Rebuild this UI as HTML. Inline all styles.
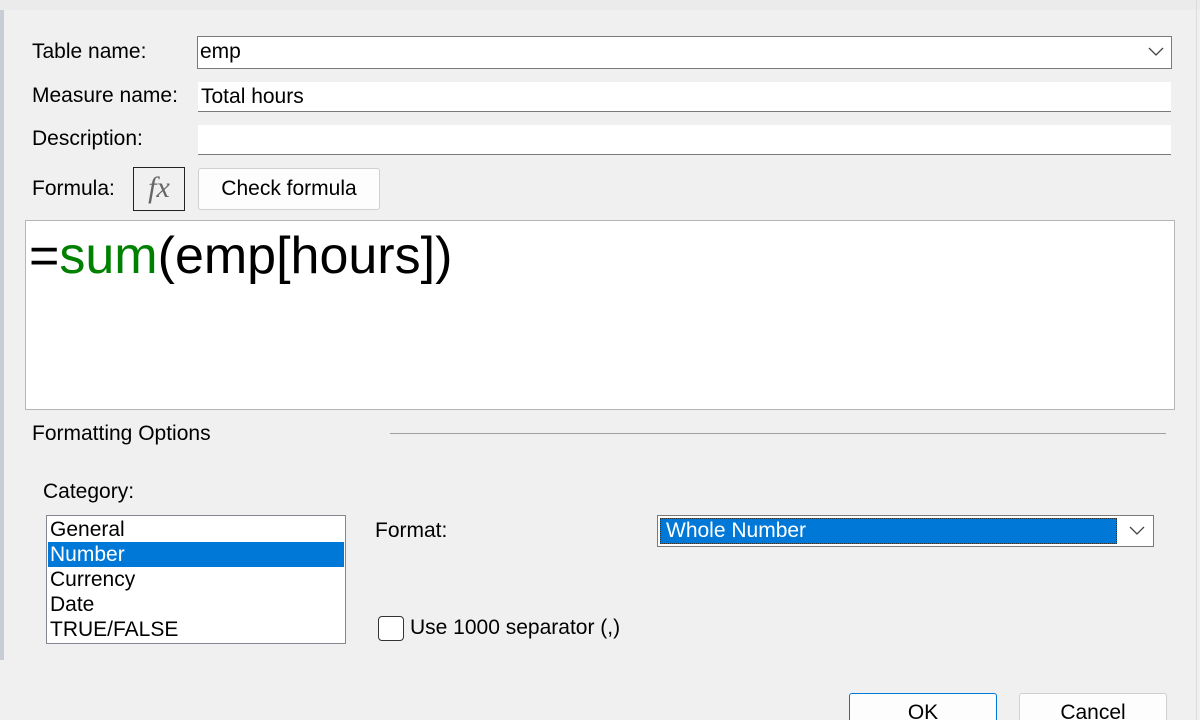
<!DOCTYPE html>
<html><head><style>
*{margin:0;padding:0;box-sizing:border-box}
html,body{width:1200px;height:720px;overflow:hidden}
body{background:#f0f0f0;position:relative;font-family:"Liberation Sans",sans-serif;font-size:21px;color:#000}
.a{position:absolute;white-space:nowrap}
.box{position:absolute;background:#fff}
</style></head><body>
<div class="a" style="left:0;top:0;width:1200px;height:10px;background:#ebebeb"></div>
<div class="a" style="left:0;top:10px;width:4px;height:650px;background:#c8ccd4"></div>
<div class="a" style="left:1196px;top:0;width:1px;height:720px;background:#dcdcdc"></div>

<div class="a" style="left:32px;top:40px">Table name:</div>
<div class="box" style="left:197px;top:36px;width:975px;height:33px;border:1px solid #7a7a7a"></div>
<div class="a" style="left:200px;top:40px">emp</div>
<svg class="a" style="left:1148px;top:47px" width="16" height="10"><path d="M1 1L8 8L15 1" fill="none" stroke="#444" stroke-width="1.3"/></svg>

<div class="a" style="left:32px;top:84px">Measure name:</div>
<div class="box" style="left:198px;top:82px;width:973px;height:30px;border-bottom:1px solid #7a7a7a"></div>
<div class="a" style="left:201px;top:85px">Total hours</div>

<div class="a" style="left:32px;top:127px">Description:</div>
<div class="box" style="left:198px;top:125px;width:973px;height:30px;border-bottom:1px solid #7a7a7a"></div>

<div class="a" style="left:32px;top:177px">Formula:</div>
<div class="a" style="left:133px;top:167px;width:52px;height:44px;border:1px solid #222;background:#f0f0f0;font-family:'Liberation Serif',serif;font-style:italic;font-size:30px;color:#666;text-align:center;line-height:40px">fx</div>
<div class="a" style="left:198px;top:168px;width:182px;height:42px;border:1px solid #d0d0d0;border-radius:3px;background:#fdfdfd;text-align:center;line-height:40px">Check formula</div>

<div class="box" style="left:25px;top:220px;width:1150px;height:190px;border:1px solid #b5b5b5"></div>
<div class="a" style="left:29px;top:225px;font-size:52px;line-height:62px">=<span style="color:#008000">sum</span>(emp[hours])</div>

<div class="a" style="left:32px;top:422px">Formatting Options</div>
<div class="a" style="left:390px;top:433px;width:776px;height:1px;background:#a0a0a0"></div>

<div class="a" style="left:43px;top:480px">Category:</div>
<div class="box" style="left:46px;top:515px;width:300px;height:129px;border:1px solid #828790"></div>
<div class="a" style="left:48px;top:542px;width:296px;height:25px;background:#0078d7"></div>
<div class="a" style="left:50px;top:517px;line-height:25px">General<br><span style="color:#fff">Number</span><br>Currency<br>Date<br>TRUE/FALSE</div>

<div class="a" style="left:375px;top:519px">Format:</div>
<div class="box" style="left:657px;top:515px;width:497px;height:32px;border:1px solid #7a7a7a"></div>
<div class="a" style="left:660px;top:518px;width:457px;height:26px;background:#0078d7;border:1px dotted #333"></div>
<div class="a" style="left:666px;top:519px;color:#fff">Whole Number</div>
<svg class="a" style="left:1129px;top:526px" width="16" height="10"><path d="M1 1L8 8L15 1" fill="none" stroke="#444" stroke-width="1.3"/></svg>

<div class="a" style="left:378px;top:616px;width:26px;height:25px;border:1px solid #333;border-radius:4px;background:#fff"></div>
<div class="a" style="left:410px;top:616px">Use 1000 separator (,)</div>

<div class="a" style="left:849px;top:693px;width:148px;height:27px;border:1px solid #0078d7;border-bottom:none;border-radius:3px 3px 0 0;background:#fdfdfd;text-align:center;line-height:38px">OK</div>
<div class="a" style="left:1019px;top:693px;width:148px;height:27px;border:1px solid #d0d0d0;border-bottom:none;border-radius:3px 3px 0 0;background:#fdfdfd;text-align:center;line-height:38px">Cancel</div>
</body></html>
